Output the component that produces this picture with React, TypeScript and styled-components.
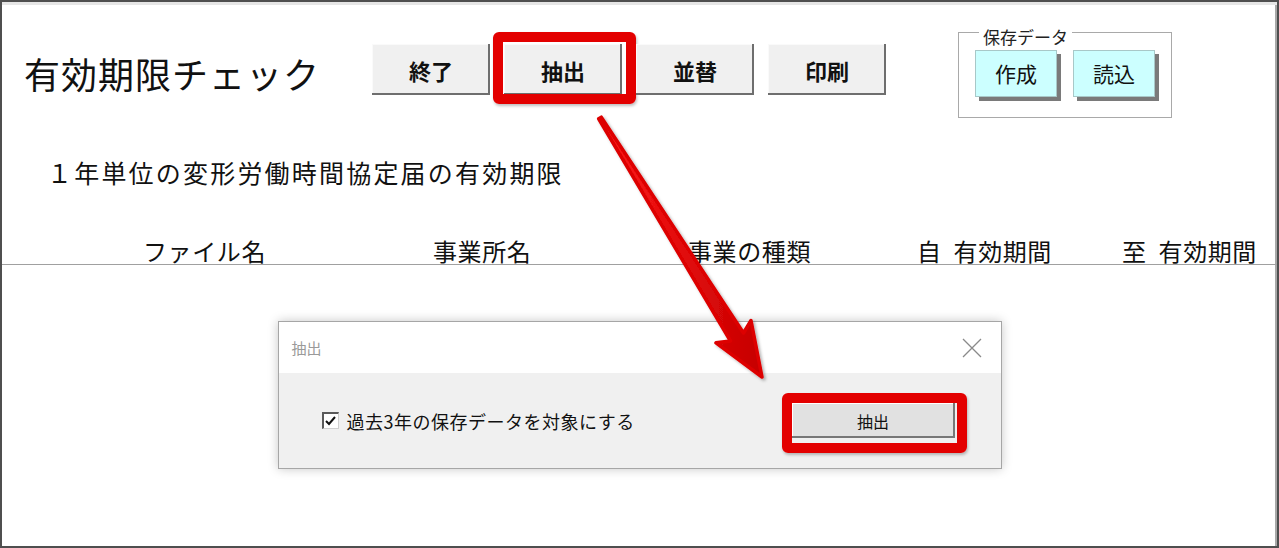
import React from 'react';
import styled, { createGlobalStyle } from 'styled-components';

const GlobalStyle = createGlobalStyle`
  html, body {
    margin: 0;
    padding: 0;
    background: #fff;
  }
  body {
    font-family: 'Noto Sans CJK JP', 'Noto Sans', sans-serif;
    color: #111;
  }
`;

const Frame = styled.div`
  position: relative;
  box-sizing: border-box;
  width: 1279px;
  height: 548px;
  border: 2px solid #4f4f4f;
  box-shadow: inset 0 3px 0 #e6e6e6, inset -2px 0 0 #a8a8a8;
  background: #fff;
  overflow: hidden;
`;

const TopRow = styled.div`
  display: flex;
  align-items: flex-start;
  height: 120px;
  padding-left: 22px;
`;

const Title = styled.h1`
  flex: 0 0 348px;
  margin: 53px 0 0;
  font-size: 36px;
  font-weight: 400;
  line-height: 36px;
  letter-spacing: 1px;
  color: #111;
`;

const Toolbar = styled.div`
  display: flex;
  gap: 14px;
  margin-top: 42px;
`;

const ToolButton = styled.button`
  position: relative;
  width: 118px;
  height: 51px;
  padding: 0;
  border: none;
  background: #f0f0f0;
  box-shadow: inset -2px -2px 0 #6e6e6e, inset 1px 1px 0 #fafafa;
  font-family: inherit;
  font-size: 22px;
  font-weight: 700;
  line-height: 1;
  color: #111;
`;

// red annotation frame drawn around a control
const Highlight = styled.span<{ $inset: string }>`
  position: absolute;
  inset: ${(p) => p.$inset};
  border: 10px solid #e30000;
  border-radius: 6px;
  box-shadow: 1px 2px 3px rgba(0, 0, 0, 0.25);
  pointer-events: none;
`;

const SaveGroup = styled.fieldset`
  margin: 18px 0 0 72px;
  padding: 5px 16px 20px 16px;
  border: 1px solid #a9a9a9;
  min-inline-size: 0;
`;

const Legend = styled.legend`
  margin-left: 4px;
  padding: 8px 4px 0;
  font-size: 17px;
  line-height: 17px;
  color: #222;
`;

const SaveButtons = styled.div`
  display: flex;
  gap: 16px;
`;

const SaveButton = styled.button`
  width: 82px;
  height: 47px;
  padding: 0;
  border: 1px solid #a8c8c8;
  background: #ccffff;
  box-shadow: 4px 4px 0 #7a7a7a;
  font-family: inherit;
  font-size: 21px;
  line-height: 1;
  color: #111;
`;

const Subtitle = styled.p`
  margin: 38px 0 0;
  padding-left: 45px;
  font-size: 25px;
  line-height: 25px;
  letter-spacing: 2.2px;
  color: #111;
`;

const HeaderRow = styled.div`
  display: grid;
  grid-template-columns: 290px 255px 229px 205px 1fr;
  margin-top: 54px;
  padding: 0 0 1px 141px;
  border-bottom: 1px solid #a0a0a0;
  font-size: 24px;
  line-height: 24px;
  letter-spacing: 0.6px;
  white-space: pre;
  color: #111;
`;

const Dialog = styled.div`
  box-sizing: border-box;
  width: 724px;
  margin: 56px auto 0;
  border: 1px solid #a6a6a6;
  box-shadow: 0 0 10px rgba(0, 0, 0, 0.22);
`;

const DialogTitle = styled.div`
  display: flex;
  align-items: center;
  justify-content: space-between;
  height: 51px;
  padding: 0 19px 0 13px;
  background: #fff;
  font-size: 15px;
  color: #9a9a9a;
`;

const DialogBody = styled.div`
  display: flex;
  align-items: center;
  justify-content: space-between;
  height: 95px;
  padding: 0 46px 0 43px;
  background: #f0f0f0;
`;

const CheckRow = styled.label`
  display: flex;
  align-items: center;
  gap: 8px;
  font-size: 18px;
  line-height: 1;
  letter-spacing: 0.5px;
  color: #111;
`;

const CheckBox = styled.span`
  box-sizing: border-box;
  display: flex;
  align-items: center;
  justify-content: center;
  width: 17px;
  height: 17px;
  background: #fff;
  border-top: 2px solid #5a5a5a;
  border-left: 2px solid #5a5a5a;
  border-right: 1px solid #d0d0d0;
  border-bottom: 1px solid #d0d0d0;
`;

const DialogButton = styled.button`
  position: relative;
  width: 163px;
  height: 35px;
  padding: 0;
  border: none;
  background: #e1e1e1;
  box-shadow: inset -2px -2px 0 #777, inset 1px 1px 0 #fff;
  font-family: inherit;
  font-size: 16px;
  line-height: 1;
  color: #111;
`;

const ArrowLayer = styled.svg`
  position: absolute;
  top: -2px;
  left: -2px;
  pointer-events: none;
`;

const columns = ['ファイル名', '事業所名', '事業の種類', '自  有効期間', '至  有効期間'];

const App: React.FC = () => (
  <>
    <GlobalStyle />
    <Frame>
      <TopRow>
        <Title>有効期限チェック</Title>
        <Toolbar>
          <ToolButton>終了</ToolButton>
          <ToolButton>
            抽出
            <Highlight $inset="-12px -14px -9px -11px" />
          </ToolButton>
          <ToolButton>並替</ToolButton>
          <ToolButton>印刷</ToolButton>
        </Toolbar>
        <SaveGroup>
          <Legend>保存データ</Legend>
          <SaveButtons>
            <SaveButton>作成</SaveButton>
            <SaveButton>読込</SaveButton>
          </SaveButtons>
        </SaveGroup>
      </TopRow>

      <Subtitle>１年単位の変形労働時間協定届の有効期限</Subtitle>

      <HeaderRow>
        {columns.map((c) => (
          <span key={c}>{c}</span>
        ))}
      </HeaderRow>

      <Dialog>
        <DialogTitle>
          <span>抽出</span>
          <svg width="20" height="20" viewBox="0 0 20 20">
            <path d="M1 1 L19 19 M19 1 L1 19" stroke="#8a8a8a" strokeWidth="1.3" fill="none" />
          </svg>
        </DialogTitle>
        <DialogBody>
          <CheckRow>
            <CheckBox>
              <svg width="11" height="10" viewBox="0 0 11 10">
                <path d="M1 5 L4 8 L10 1" stroke="#111" strokeWidth="2" fill="none" />
              </svg>
            </CheckBox>
            過去3年の保存データを対象にする
          </CheckRow>
          <DialogButton>
            抽出
            <Highlight $inset="-10px -12px -15px -10px" />
          </DialogButton>
        </DialogBody>
      </Dialog>

      <ArrowLayer width="1279" height="548" viewBox="0 0 1279 548">
        <defs>
          <linearGradient id="arrowFill" x1="0" y1="0" x2="1" y2="0">
            <stop offset="0" stopColor="#ff1a1a" />
            <stop offset="1" stopColor="#c60000" />
          </linearGradient>
          <filter id="arrowShadow" x="-20%" y="-20%" width="140%" height="140%">
            <feDropShadow dx="2" dy="2" stdDeviation="1.8" floodColor="#000" floodOpacity="0.3" />
          </filter>
        </defs>
        <path
          d="M601.3 117.2 L743.5 333 L751 320.5 L762 377 L716 342.8 L730.5 341 L598.7 118.8 Z"
          fill="url(#arrowFill)"
          stroke="#dd0000"
          strokeWidth="3.5"
          strokeLinejoin="round"
          filter="url(#arrowShadow)"
        />
      </ArrowLayer>
    </Frame>
  </>
);

export default App;
